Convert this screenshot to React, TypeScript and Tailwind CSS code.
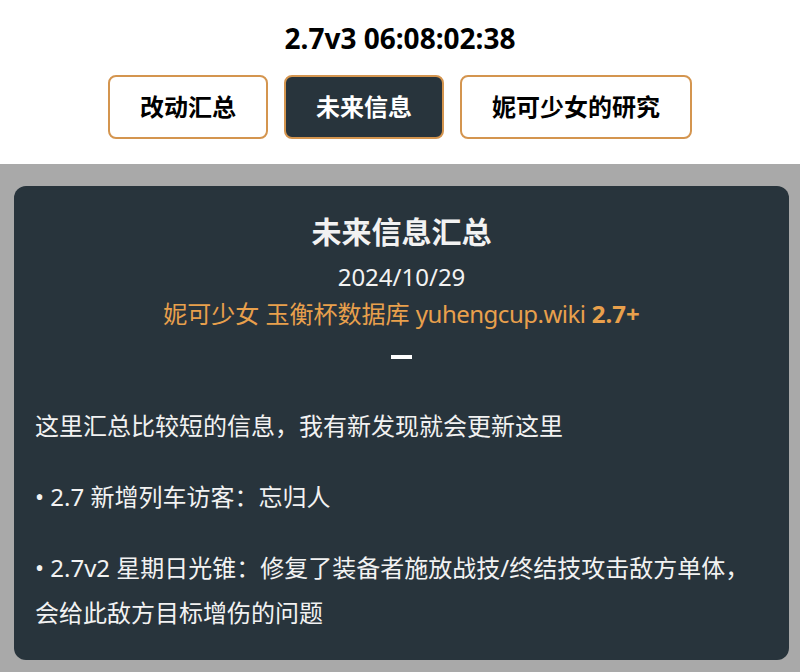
import { useState } from "react"

const tabs = ["改动汇总", "未来信息", "妮可少女的研究"]

const App = () => {
    const [active, setActive] = useState(1)

    return (
        <div
            className="min-h-[672px] bg-[#a9a9a9] text-black"
            style={{ fontFamily: '"Noto Sans", "Noto Sans CJK SC", sans-serif' }}
        >
            {/* Top bar */}
            <div className="flex flex-col items-center bg-white pt-[20px] pb-[25px]">
                <h1 className="text-[28px] font-bold leading-[36px]">2.7v3 06:08:02:38</h1>
                <div className="mt-[19px] flex gap-4">
                    {tabs.map((t, i) => (
                        <button
                            key={t}
                            onClick={() => setActive(i)}
                            className={
                                i === active
                                    ? "rounded-lg border-2 border-[#d4954f] bg-[#28343c] px-[30px] py-[12px] text-[24px] font-bold leading-[36px] text-white"
                                    : "rounded-lg border-2 border-[#d4954f] bg-white px-[30px] py-[12px] text-[24px] font-bold leading-[36px] text-black"
                            }
                        >
                            {t}
                        </button>
                    ))}
                </div>
            </div>

            {/* Content card */}
            <div className="pt-[22px] pb-[11px] pl-[14px] pr-[11px]">
                <div className="rounded-xl bg-[#28343c] px-[21px] pt-[19px] pb-[25px] text-[#f2f2f2]">
                    <div className="flex flex-col items-center">
                        <h2 className="text-[30px] font-bold leading-[53px]">未来信息汇总</h2>
                        <div className="text-[24px] leading-[37px]">2024/10/29</div>
                        <div className="text-[24px] leading-[37px] text-[#e9a04c]">
                            妮可少女 玉衡杯数据库 <span className="tracking-[-0.5px]">yuhengcup.wiki</span> <span className="font-bold">2.7+</span>
                        </div>
                        <div className="mt-[23px] h-[4px] w-[21px] bg-white" />
                    </div>

                    <div className="mt-[44px] text-[24px] leading-[45px]">
                        <p className="mb-[26px]">这里汇总比较短的信息，我有新发现就会更新这里</p>
                        <p className="mb-[26px]">• 2.7 新增列车访客：忘归人</p>
                        <p>• 2.7v2 星期日光锥：修复了装备者施放战技/终结技攻击敌方单体，会给此敌方目标增伤的问题</p>
                    </div>
                </div>
            </div>
        </div>
    )
}

export default App
